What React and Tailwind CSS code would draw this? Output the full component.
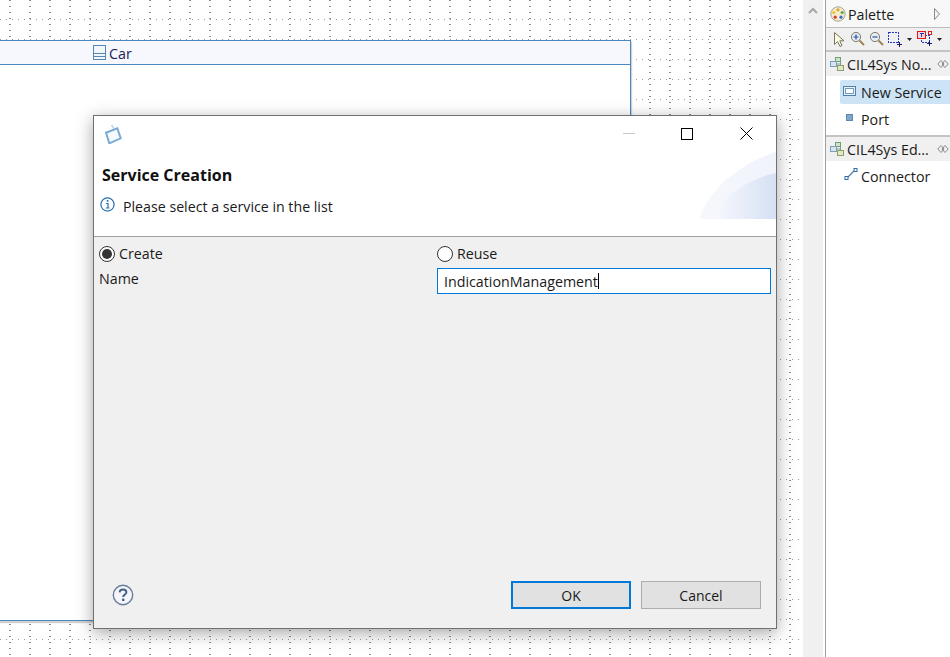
import React from "react";

function Grid() {
  return (
    <svg className="absolute inset-0 w-full h-full" shapeRendering="crispEdges">
      <defs>
        <pattern id="gv" x="0" y="0" width="20" height="6" patternUnits="userSpaceOnUse">
          <rect x="9" y="0" width="2" height="1" fill="#8e8e8e" />
        </pattern>
        <pattern id="gh" x="0" y="0" width="6" height="20" patternUnits="userSpaceOnUse">
          <rect x="0" y="19" width="1" height="2" fill="#9a9a9a" />
        </pattern>
      </defs>
      <rect width="100%" height="100%" fill="url(#gv)" />
      <rect width="100%" height="100%" fill="url(#gh)" />
    </svg>
  );
}

function DrawerIcon() {
  return (
    <svg width="16" height="16" viewBox="0 0 16 16" className="shrink-0">
      <rect x="5.5" y="1.5" width="5" height="4" fill="#cfe3c8" stroke="#6f9e78" />
      <rect x="0.5" y="5.5" width="6" height="5" fill="#d5e4ef" stroke="#7d9fb8" />
      <rect x="7.5" y="9.5" width="6" height="5" fill="#e2e8c0" stroke="#8aa070" />
      <path d="M10.5 5.5v4M6.5 8h4" stroke="#7d9f88" fill="none" />
    </svg>
  );
}

function Arrows() {
  return (
    <svg width="12" height="10" viewBox="0 0 12 10" className="shrink-0">
      <path d="M4 1.5 0.8 5 4 8.5M8 1.5 11.2 5 8 8.5M4 1.5 7 5 4 8.5M8 1.5 5 5 8 8.5" stroke="#8a8a8a" fill="none" />
    </svg>
  );
}

function Drawer({ label }) {
  return (
    <div className="h-[24px] bg-[#f0f0f0] flex items-center pl-[4px] pr-[1px] gap-[1px]">
      <DrawerIcon />
      <span className="flex-1 pt-[2px] text-[14.25px] leading-none text-[#1a1a1a] whitespace-nowrap">{label}</span>
      <Arrows />
    </div>
  );
}

function Palette() {
  return (
    <aside className="w-[125px] shrink-0 flex flex-col bg-white border-l border-[#a0a0a0] overflow-hidden">
      <div className="h-[27px] bg-[#f8f8f8] flex items-center pl-[4px] pr-[9px] gap-[2px]">
        <svg width="16" height="16" viewBox="0 0 16 16">
          <circle cx="8" cy="8" r="7.2" fill="#f3ecd2" stroke="#a9a48e" />
          <circle cx="8" cy="3.8" r="1.6" fill="#e8a020" />
          <circle cx="12.2" cy="6.5" r="1.6" fill="#58a84a" />
          <circle cx="11" cy="11.2" r="1.6" fill="#3a70c8" />
          <circle cx="5.2" cy="11.2" r="1.6" fill="#d83a3a" />
          <circle cx="3.8" cy="6.5" r="1.6" fill="#e8c820" />
        </svg>
        <span className="flex-1 pt-[3px] text-[14.25px] leading-none text-[#1a1a1a]">Palette</span>
        <svg width="8" height="14" viewBox="0 0 8 14">
          <path d="M1.5 1.5 6.5 7 1.5 12.5Z" fill="#f4f4f4" stroke="#8a8a8a" />
        </svg>
      </div>
      <div className="h-[25px] bg-[#f0f0f0] border-t border-[#bdbdbd] border-b-2 border-b-[#c4c4c4] flex items-center pl-[6px] gap-[4px]">
        <svg width="14" height="17" viewBox="0 0 14 17">
          <path d="M2.5 1.5V13.5L5.5 10.5 8 15.5 10 14.5 7.8 9.8H12Z" fill="#fdfbe0" stroke="#77775f" />
        </svg>
        <svg width="15" height="16" viewBox="0 0 15 16">
          <circle cx="6" cy="6" r="4.6" fill="#e6ecf4" stroke="#7d7d6a" />
          <path d="M3.5 6h5M6 3.5v5" stroke="#2a4fa8" strokeWidth="1.2" />
          <path d="M9.5 9.5 14 14" stroke="#9b8458" strokeWidth="2" />
        </svg>
        <svg width="15" height="16" viewBox="0 0 15 16">
          <circle cx="6" cy="6" r="4.6" fill="#e6ecf4" stroke="#7d7d6a" />
          <path d="M3.5 6h5" stroke="#2a4fa8" strokeWidth="1.2" />
          <path d="M9.5 9.5 14 14" stroke="#9b8458" strokeWidth="2" />
        </svg>
        <svg width="15" height="15" viewBox="0 0 15 15" shapeRendering="crispEdges">
          <rect x="0.5" y="0.5" width="10" height="10" fill="none" stroke="#2038c8" strokeDasharray="2 1" />
          <path d="M9 12.5h5M11.5 10v5" stroke="#1a1a60" />
        </svg>
        <svg width="5" height="3" viewBox="0 0 5 3"><path d="M0 0h5L2.5 3Z" fill="#222" /></svg>
        <svg width="16" height="16" viewBox="0 0 16 16" shapeRendering="crispEdges" className="ml-[1px]">
          <rect x="4.5" y="4.5" width="8" height="7" fill="none" stroke="#2038c8" strokeDasharray="2 1" />
          <rect x="0.5" y="0.5" width="8" height="7" fill="#f7d8d8" stroke="#e01818" />
          <path d="M2.5 2.5h4M4.5 2.5v3.5" stroke="#2038c8" />
          <rect x="11" y="0" width="3" height="3" fill="#fff" stroke="#e01818" />
          <path d="M10 12.5h5M12.5 10v5" stroke="#1a1a60" />
        </svg>
        <svg width="5" height="3" viewBox="0 0 5 3"><path d="M0 0h5L2.5 3Z" fill="#222" /></svg>
      </div>
      <Drawer label="CIL4Sys No..." />
      <div className="flex flex-col pt-[4px] pl-[14px]">
        <div className="h-[24px] bg-[#cde4f7] rounded-l-[2px] flex items-center pl-[3px] gap-[5px]">
          <svg width="13" height="10" viewBox="0 0 13 10" shapeRendering="crispEdges" className="-mt-[2px]">
            <rect x="0.5" y="0.5" width="12" height="9" fill="#eaf1f9" stroke="#4e7fa8" />
            <rect x="2.5" y="2.5" width="8" height="5" fill="#fff" stroke="#6f9cc0" />
          </svg>
          <span className="pt-[2px] text-[14.25px] leading-none text-[#1a1a1a] whitespace-nowrap">New Service</span>
        </div>
        <div className="h-[29px] flex items-center pl-[6px] gap-[8px]">
          <span className="w-[7px] h-[7px] bg-[#7fa6cd] border border-[#5f88b0] -mt-[2px]" />
          <span className="pt-[3px] text-[14.25px] leading-none text-[#1a1a1a]">Port</span>
        </div>
      </div>
      <div className="h-[2px] mt-[2px] bg-[#c4c4c4]" />
      <Drawer label="CIL4Sys Ed..." />
      <div className="h-[30px] flex items-center pl-[18px] gap-[3px]">
        <svg width="14" height="14" viewBox="0 0 14 14" className="-mt-[4px]">
          <path d="M3 11 11 3" stroke="#5a7f9e" strokeWidth="1.2" />
          <rect x="1" y="9.5" width="3" height="3" fill="#fff" stroke="#2f6da8" />
          <rect x="10" y="1.5" width="3" height="3" fill="#fff" stroke="#2f6da8" />
        </svg>
        <span className="pt-[2px] text-[14.25px] leading-none text-[#1a1a1a]">Connector</span>
      </div>
    </aside>
  );
}

function CarNode() {
  return (
    <div className="absolute left-[-2px] top-[40px] w-[633px] h-[581px] bg-white border border-[#4a88bf] flex flex-col shadow-[1px_2px_1px_rgba(0,0,0,0.18)]">
      <div className="h-[24px] bg-[#f6f8fe] border-b border-[#4a88bf] flex items-center pl-[94px] gap-[3px] shrink-0">
        <svg width="13" height="15" viewBox="0 0 13 15" shapeRendering="crispEdges">
          <rect x="0.5" y="0.5" width="12" height="14" fill="#f2f6fb" stroke="#5588b4" />
          <path d="M1 8.5h11M1 11.5h11" stroke="#5588b4" />
        </svg>
        <span className="pt-[3px] text-[14.25px] leading-none text-[#20205a]">Car</span>
      </div>
    </div>
  );
}

function Radio({ checked, label }) {
  return (
    <label className="flex items-center gap-[4px] h-[17px]">
      <span className="w-[16px] h-[16px] rounded-full border border-[#333] bg-white flex items-center justify-center shrink-0">
        {checked && <span className="w-[10px] h-[10px] rounded-full bg-[#333]" />}
      </span>
      <span className="pt-[2px] text-[14.25px] leading-none text-[#1a1a1a]">{label}</span>
    </label>
  );
}

function Dialog() {
  return (
    <div className="absolute left-[93px] top-[115px] w-[684px] h-[514px] border border-[#707070] bg-[#f0f0f0] flex flex-col shadow-[0_4px_16px_rgba(0,0,0,0.35)]">
      <div className="relative h-[121px] bg-white border-b border-[#a0a0a0] shrink-0 flex flex-col overflow-hidden">
        <div className="h-[38px] flex items-center pl-[10px] shrink-0">
          <svg width="18" height="20" viewBox="0 0 18 20" className="-mt-[2px]">
            <path d="M7.5 1 10 4.5" stroke="#c6d4de" strokeWidth="1.6" />
            <path d="M2 8.7 13.3 4.3 16.7 14.3 5.3 19.3Z" fill="#f6fafd" stroke="#7aaad4" strokeWidth="2" />
          </svg>
        </div>
        <svg width="76" height="68" viewBox="0 0 76 68" className="absolute right-0 top-[36px]">
          <defs>
            <linearGradient id="a" x1="0" x2="1" y1="0" y2="0">
              <stop offset="0" stopColor="#f6f8fd" />
              <stop offset="1" stopColor="#f0f3fb" />
            </linearGradient>
            <linearGradient id="b" x1="0" x2="1" y1="0" y2="0">
              <stop offset="0" stopColor="#f8f9fe" />
              <stop offset="1" stopColor="#d6e0f4" />
            </linearGradient>
          </defs>
          <path d="M0 67C6 40 38 12 76 0V67Z" fill="url(#a)" />
          <path d="M12 67C22 44 50 26 76 21V67Z" fill="url(#b)" />
        </svg>
        <div className="absolute right-[23px] top-[11px] h-[13px] flex items-center">
          <span className="w-[12px] h-px bg-[#c8c8c8]" />
          <span className="w-[12px] h-[12px] border border-black ml-[46px]" />
          <svg width="13" height="13" viewBox="0 0 13 13" className="ml-[47px]"><path d="M.5.5 12.5 12.5M12.5.5 .5 12.5" stroke="#000" /></svg>
        </div>
        <h2 className="pl-[8px] mt-[10px] text-[16px] leading-[22px] font-bold text-[#111]">Service Creation</h2>
        <div className="flex items-center pl-[6px] mt-[14px] gap-[8px]">
          <svg width="15" height="15" viewBox="0 0 15 15" className="-mt-[6px]">
            <circle cx="7.5" cy="7.5" r="6.6" fill="#fff" stroke="#2a6fb0" strokeWidth="1.2" />
            <rect x="6.8" y="3" width="1.6" height="1.8" fill="#2a6fb0" />
            <path d="M6 6.5h2v4.2M5.8 11h3.6" stroke="#2a6fb0" strokeWidth="1.2" fill="none" />
          </svg>
          <span className="text-[14.2px] leading-none text-[#1a1a1a]">Please select a service in the list</span>
        </div>
      </div>
      <div className="flex-1 grid grid-cols-[338px_1fr] grid-rows-[17px_26px] pl-[5px] pr-[5px] pt-[8px] gap-y-[6px] content-start">
        <Radio checked label="Create" />
        <Radio label="Reuse" />
        <span className="text-[14.25px] leading-none text-[#1a1a1a] mt-[4px]">Name</span>
        <div className="h-[26px] bg-white border border-[#0078d7] flex items-center pl-[6px]">
          <span className="pt-[2px] text-[14.25px] leading-none text-[#1a1a1a]">IndicationManagement</span>
          <span className="w-px h-[16px] bg-black" />
        </div>
      </div>
      <div className="h-[47px] shrink-0 flex items-start pl-[18px] pr-[15px] pb-[19px]">
        <svg width="22" height="22" viewBox="0 0 22 22" className="mt-[3px]">
          <circle cx="11" cy="11" r="9.7" fill="#f4f5f8" stroke="#6a7d9c" strokeWidth="1.4" />
          <path d="M7.6 8.4C7.7 6.4 9 5.4 11 5.4 13 5.4 14.4 6.5 14.4 8.2 14.4 10.4 11.2 10.6 11.2 13" fill="none" stroke="#46608c" strokeWidth="2" />
          <rect x="10" y="14.6" width="2.4" height="2.4" fill="#46608c" />
        </svg>
        <div className="ml-auto flex gap-[10px]">
          <button className="w-[120px] h-[28px] pt-[2px] bg-[#e1e1e1] border-2 border-[#0078d7] text-[14px] leading-none text-[#1a1a1a]">OK</button>
          <button className="w-[120px] h-[28px] pt-[2px] bg-[#e1e1e1] border border-[#adadad] text-[14px] leading-none text-[#1a1a1a]">Cancel</button>
        </div>
      </div>
    </div>
  );
}

export default function App() {
  return (
    <div className="w-[950px] h-[657px] flex overflow-hidden bg-white font-['Open_Sans','Noto_Sans',sans-serif]">
      <main className="relative flex-1 overflow-hidden">
        <Grid />
        <CarNode />
      </main>
      <div className="w-[20px] shrink-0 bg-[#f0f0f0] flex justify-center pt-[7px]">
        <svg width="10" height="7" viewBox="0 0 10 7"><path d="M1 6 5 2 9 6" fill="none" stroke="#a6a6a6" strokeWidth="2" /></svg>
      </div>
      <div className="w-[2px] shrink-0 bg-white" />
      <Palette />
      <Dialog />
    </div>
  );
}
